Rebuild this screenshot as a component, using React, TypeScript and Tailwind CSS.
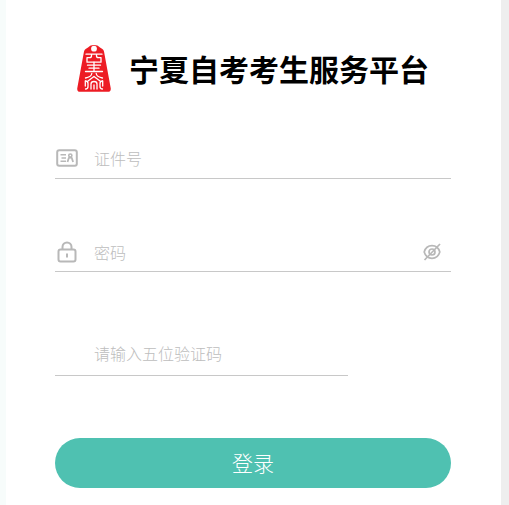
import React, { useState } from "react";

const LogoIcon = () => (
  <svg viewBox="0 0 34 48" className="w-[34px] h-12 shrink-0" fill="none" aria-hidden="true">
    <path
      d="M7 7.500C7.500 5 9.500 4.500 11 3.500 12.500 1.800 14.500 1 17 1s4.500.8 6 2.500c1.500 1 3.500 1.500 4 4L33.700 44c.4 2.700-.7 3.800-3 3.800H3.300C1 47.800-.1 46.700.3 44z"
      fill="#ed1c24"
    />
    <circle cx="17" cy="4.700" r="2.900" fill="#fff" />
    <g stroke="#fff" strokeWidth="1.300" strokeLinecap="round" strokeLinejoin="round">
      <path d="M9 10.200h16M14.500 10.200v1.500q0 2-2 2H10v4.500h14v-4.500h-2.500q-2 0-2-2v-1.500" />
      <path d="M17 18.200v9M10.500 21.200h13M12 24.200h10M8.500 27.500h17" />
      <path d="M14.800 29.500q-.5 3.500-6.300 4.500M19.200 29.500q.5 3.500 6.300 4.500" />
      <path d="M8.500 37q2.500 0 2.500 2.500v3q0 2.500-2.500 2.500M25.500 37q-2.500 0-2.500 2.500v3q0 2.500 2.500 2.500" />
      <path d="M11 37l6-4.500 6 4.500M14 45v-5q0-2.500 3-2.500t3 2.500v5M17 41v4M8.300 37v5M25.700 37v5" />
    </g>
  </svg>
);

const IdCardIcon = () => (
  <svg viewBox="0 0 22 18" className="w-[22px] h-[18px]" fill="none" stroke="#b8b8b8" aria-hidden="true">
    <rect x="1.200" y="1.200" width="19.600" height="15.600" rx="2" strokeWidth="2" />
    <path d="M4.500 5.800H10M5.500 9H10M4.500 12.200H10" strokeWidth="1.600" />
    <circle cx="14.300" cy="6.600" r="1.600" strokeWidth="1.600" />
    <path d="M11.500 13l1.300-4q1.500-1 3 0l1.300 4" strokeWidth="1.800" />
  </svg>
);

const LockIcon = () => (
  <svg viewBox="0 0 20 22" className="w-5 h-[22px]" fill="none" stroke="#b8b8b8" strokeWidth="2" aria-hidden="true">
    <rect x="1.500" y="8.500" width="17" height="12" rx="2" />
    <path d="M5.500 8.500V6a4.500 4.500 0 0 1 9 0v2.500M10 12.500v4" />
  </svg>
);

const EyeOffIcon = () => (
  <svg viewBox="0 0 18 18" className="w-[18px] h-[18px]" fill="none" stroke="#b8b8b8" strokeWidth="1.700" aria-hidden="true">
    <path d="M1.200 9C2.500 4.500 5.500 2.700 9 2.700S15.500 4.500 16.800 9C15.500 13.500 12.500 15.300 9 15.300S2.500 13.500 1.200 9z" />
    <circle cx="9" cy="9" r="3" />
    <path d="M17 1L1.500 17" />
  </svg>
);

const Field = ({
  label,
  type = "text",
  icon,
  action,
  className
}: {
  label: string;
  type?: string;
  icon?: React.ReactNode;
  action?: React.ReactNode;
  className: string;
}) => {
  return (
    <label className={`flex items-center border-b border-[#c8c8c8] ${className}`}>
      <span className="w-[23px] shrink-0 flex justify-center">{icon}</span>
      <input
        type={type}
        placeholder={label}
        aria-label={label}
        className="flex-1 min-w-0 ml-4 h-8 bg-transparent text-base font-light text-[#333] placeholder:text-[#bdbdbd] outline-none"
      />
      {action}
    </label>
  );
};

const App = () => {
  const [visible, setVisible] = useState(false);

  return (
    <div className="min-h-screen bg-white border-l-6 border-l-[#f7fcfb] border-r-8 border-r-[#eeeeee] font-['Noto_Sans_CJK_SC',sans-serif]">
      <main className="px-[50px] pl-[49px] pt-11">
        <header className="flex items-center justify-center gap-[18px] h-12">
          <LogoIcon />
          <h1 className="text-[30px] leading-none font-bold text-black whitespace-nowrap">
            宁夏自考考生服务平台
          </h1>
        </header>

        <form onSubmit={(e) => e.preventDefault()}>
          <Field label="证件号" icon={<IdCardIcon />} className="mt-[46px] h-[41px]" />
          <Field
            label="密码"
            type={visible ? "text" : "password"}
            icon={<LockIcon />}
            className="mt-[54px] h-[39px]"
            action={
              <button
                type="button"
                aria-label="显示密码"
                onClick={() => setVisible(!visible)}
                className="mr-2.5"
              >
                <EyeOffIcon />
              </button>
            }
          />
          <Field label="请输入五位验证码" className="mt-[58px] h-[46px] w-[74%]" />
          <button
            type="submit"
            className="mt-[62px] w-full h-[50px] rounded-full bg-[#4fc1b1] text-[21px] font-light text-white"
          >
            登录
          </button>
        </form>
      </main>
    </div>
  );
};

export default App;
